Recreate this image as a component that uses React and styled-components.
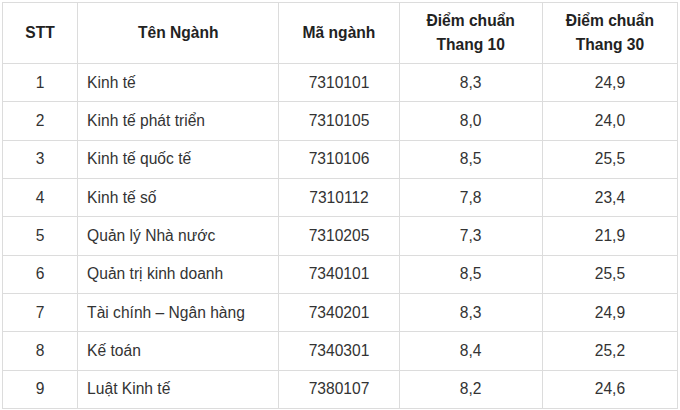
import React from "react";
import styled, { createGlobalStyle } from "styled-components";

const Global = createGlobalStyle`
  html, body { margin: 0; padding: 0; background: #fff; }
  body { font-family: "Liberation Sans", Arial, sans-serif; }
`;

const Page = styled.div`
  padding: 2px 0 0 2px;
`;

const Table = styled.table`
  border-collapse: collapse;
  table-layout: fixed;
  width: 676px;
  color: #333;
  font-size: 15.6px;
`;

const HeadRow = styled.tr`
  height: 61px;
`;

const Row = styled.tr`
  height: 38.33px;
`;

const Th = styled.th`
  border: 1px solid #dcdcdc;
  font-weight: bold;
  color: #222;
  text-align: center;
  vertical-align: middle;
  line-height: 24px;
  padding: 0 6px;
`;

const Td = styled.td`
  border: 1px solid #dcdcdc;
  text-align: ${(p) => (p.$left ? "left" : "center")};
  padding: ${(p) => (p.$left ? "0 9px" : "0 6px")};
  vertical-align: middle;
  line-height: 20px;
`;

const rows = [
  ["1", "Kinh tế", "7310101", "8,3", "24,9"],
  ["2", "Kinh tế phát triển", "7310105", "8,0", "24,0"],
  ["3", "Kinh tế quốc tế", "7310106", "8,5", "25,5"],
  ["4", "Kinh tế số", "7310112", "7,8", "23,4"],
  ["5", "Quản lý Nhà nước", "7310205", "7,3", "21,9"],
  ["6", "Quản trị kinh doanh", "7340101", "8,5", "25,5"],
  ["7", "Tài chính – Ngân hàng", "7340201", "8,3", "24,9"],
  ["8", "Kế toán", "7340301", "8,4", "25,2"],
  ["9", "Luật Kinh tế", "7380107", "8,2", "24,6"],
];

export default function App() {
  return (
    <Page>
      <Global />
      <Table>
        <colgroup>
          <col style={{ width: 75 }} />
          <col style={{ width: 201 }} />
          <col style={{ width: 120 }} />
          <col style={{ width: 143 }} />
          <col style={{ width: 135 }} />
        </colgroup>
        <thead>
          <HeadRow>
            <Th>STT</Th>
            <Th>Tên Ngành</Th>
            <Th>Mã ngành</Th>
            <Th>
              Điểm chuẩn
              <br />
              Thang 10
            </Th>
            <Th>
              Điểm chuẩn
              <br />
              Thang 30
            </Th>
          </HeadRow>
        </thead>
        <tbody>
          {rows.map((r) => (
            <Row key={r[0]}>
              <Td>{r[0]}</Td>
              <Td $left>{r[1]}</Td>
              <Td>{r[2]}</Td>
              <Td>{r[3]}</Td>
              <Td>{r[4]}</Td>
            </Row>
          ))}
        </tbody>
      </Table>
    </Page>
  );
}
